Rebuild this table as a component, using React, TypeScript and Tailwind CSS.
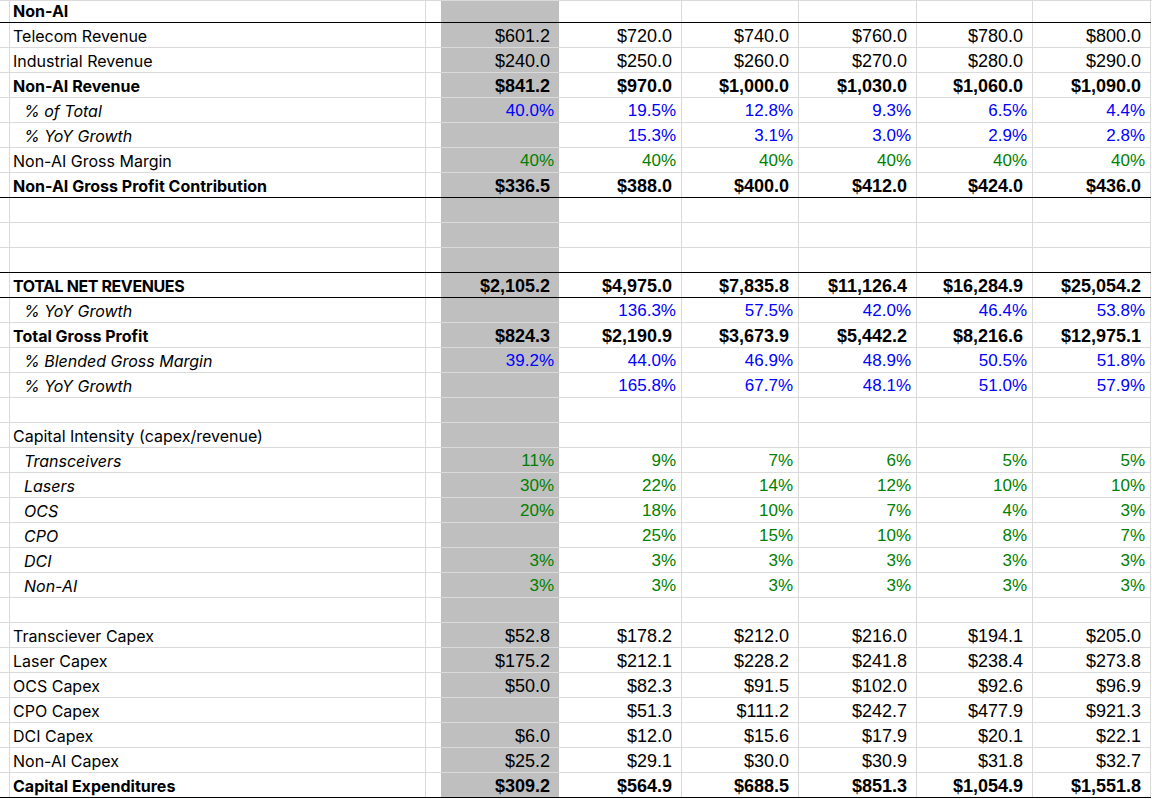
import * as React from 'react';

type Tone = 'black' | 'blue' | 'green';
type Kind = '$' | '%';

interface SheetRow {
  label?: string;
  weight?: 'bold' | 'italic' | 'normal';
  values?: string[];
  tone?: Tone;
  kind?: Kind;
  rule?: boolean;
  tight?: boolean;
}

const rows: SheetRow[] = [
  { label: 'Non-AI', weight: 'bold', rule: true },
  { label: 'Telecom Revenue', values: ['$601.2', '$720.0', '$740.0', '$760.0', '$780.0', '$800.0'] },
  { label: 'Industrial Revenue', values: ['$240.0', '$250.0', '$260.0', '$270.0', '$280.0', '$290.0'] },
  { label: 'Non-AI Revenue', weight: 'bold', values: ['$841.2', '$970.0', '$1,000.0', '$1,030.0', '$1,060.0', '$1,090.0'] },
  { label: '% of Total', weight: 'italic', tone: 'blue', kind: '%', values: ['40.0%', '19.5%', '12.8%', '9.3%', '6.5%', '4.4%'] },
  { label: '% YoY Growth', weight: 'italic', tone: 'blue', kind: '%', values: ['', '15.3%', '3.1%', '3.0%', '2.9%', '2.8%'] },
  { label: 'Non-AI Gross Margin', tone: 'green', kind: '%', values: ['40%', '40%', '40%', '40%', '40%', '40%'] },
  { label: 'Non-AI Gross Profit Contribution', weight: 'bold', rule: true, values: ['$336.5', '$388.0', '$400.0', '$412.0', '$424.0', '$436.0'] },
  {},
  {},
  { rule: true },
  { label: 'TOTAL NET REVENUES', weight: 'bold', rule: true, tight: true, values: ['$2,105.2', '$4,975.0', '$7,835.8', '$11,126.4', '$16,284.9', '$25,054.2'] },
  { label: '% YoY Growth', weight: 'italic', tone: 'blue', kind: '%', values: ['', '136.3%', '57.5%', '42.0%', '46.4%', '53.8%'] },
  { label: 'Total Gross Profit', weight: 'bold', values: ['$824.3', '$2,190.9', '$3,673.9', '$5,442.2', '$8,216.6', '$12,975.1'] },
  { label: '% Blended Gross Margin', weight: 'italic', tone: 'blue', kind: '%', values: ['39.2%', '44.0%', '46.9%', '48.9%', '50.5%', '51.8%'] },
  { label: '% YoY Growth', weight: 'italic', tone: 'blue', kind: '%', values: ['', '165.8%', '67.7%', '48.1%', '51.0%', '57.9%'] },
  {},
  { label: 'Capital Intensity (capex/revenue)' },
  { label: 'Transceivers', weight: 'italic', tone: 'green', kind: '%', values: ['11%', '9%', '7%', '6%', '5%', '5%'] },
  { label: 'Lasers', weight: 'italic', tone: 'green', kind: '%', values: ['30%', '22%', '14%', '12%', '10%', '10%'] },
  { label: 'OCS', weight: 'italic', tone: 'green', kind: '%', values: ['20%', '18%', '10%', '7%', '4%', '3%'] },
  { label: 'CPO', weight: 'italic', tone: 'green', kind: '%', values: ['', '25%', '15%', '10%', '8%', '7%'] },
  { label: 'DCI', weight: 'italic', tone: 'green', kind: '%', values: ['3%', '3%', '3%', '3%', '3%', '3%'] },
  { label: 'Non-AI', weight: 'italic', tone: 'green', kind: '%', values: ['3%', '3%', '3%', '3%', '3%', '3%'] },
  {},
  { label: 'Transciever Capex', values: ['$52.8', '$178.2', '$212.0', '$216.0', '$194.1', '$205.0'] },
  { label: 'Laser Capex', values: ['$175.2', '$212.1', '$228.2', '$241.8', '$238.4', '$273.8'] },
  { label: 'OCS Capex', values: ['$50.0', '$82.3', '$91.5', '$102.0', '$92.6', '$96.9'] },
  { label: 'CPO Capex', values: ['', '$51.3', '$111.2', '$242.7', '$477.9', '$921.3'] },
  { label: 'DCI Capex', values: ['$6.0', '$12.0', '$15.6', '$17.9', '$20.1', '$22.1'] },
  { label: 'Non-AI Capex', values: ['$25.2', '$29.1', '$30.0', '$30.9', '$31.8', '$32.7'] },
  { label: 'Capital Expenditures', weight: 'bold', rule: true, values: ['$309.2', '$564.9', '$688.5', '$851.3', '$1,054.9', '$1,551.8'] },
];

// data column widths incl. right gridline (gray column has none)
const dataCols = ['w-[118px]', 'w-[123px]', 'w-[117px]', 'w-[118px]', 'w-[116px]', 'w-[118px]'];

const toneClass: Record<Tone, string> = {
  black: 'text-black',
  blue: 'text-[#0000ff]',
  green: 'text-[#008000]',
};

function Row({ row, first }: { row: SheetRow; first: boolean }) {
  const height = first ? 'h-[22px]' : 'h-[25px]';
  const bottom = row.rule ? 'border-black' : 'border-[#dadada]';
  const weight = row.weight ?? 'normal';
  const kind = row.kind ?? '$';
  const tone = toneClass[row.tone ?? 'black'];

  return (
    <div className={`flex ${height} w-[1151px] border-b ${bottom}`}>
      <div className="w-[10px] flex-shrink-0 border-r border-[#dadada]" />
      <div
        className={`flex w-[416px] flex-shrink-0 items-end border-r border-[#dadada] pb-[1px] text-[16px] leading-[20px] text-black ${
          weight === 'italic' ? 'pl-[14px] italic' : 'pl-[3px]'
        } ${weight === 'bold' ? 'font-bold' : ''} ${row.tight ? 'tracking-[-0.4px]' : ''}`}
        style={{ fontFamily: 'Inter, "Liberation Sans", sans-serif' }}
      >
        {row.label}
      </div>
      <div className="w-[15px] flex-shrink-0" />
      {dataCols.map((w, i) => (
        <div
          key={i}
          className={`flex ${w} flex-shrink-0 items-end justify-end pb-[1px] font-['Liberation_Sans',Arial,sans-serif] leading-[20px] ${
            i === 0 ? 'bg-[#bfbfbf]' : 'border-r border-[#dadada]'
          } ${kind === '%' ? 'pr-[5px] text-[17px]' : 'pr-[9px] text-[18px]'} ${weight === 'bold' ? 'font-bold' : ''} ${tone}`}
        >
          {row.values?.[i] ?? ''}
        </div>
      ))}
    </div>
  );
}

export default function App() {
  return (
    <div className="h-[799px] w-[1152px] overflow-hidden bg-white">
      <div className="border-t border-[#dadada]">
        {rows.map((row, i) => (
          <Row key={i} row={row} first={i === 0} />
        ))}
      </div>
    </div>
  );
}
